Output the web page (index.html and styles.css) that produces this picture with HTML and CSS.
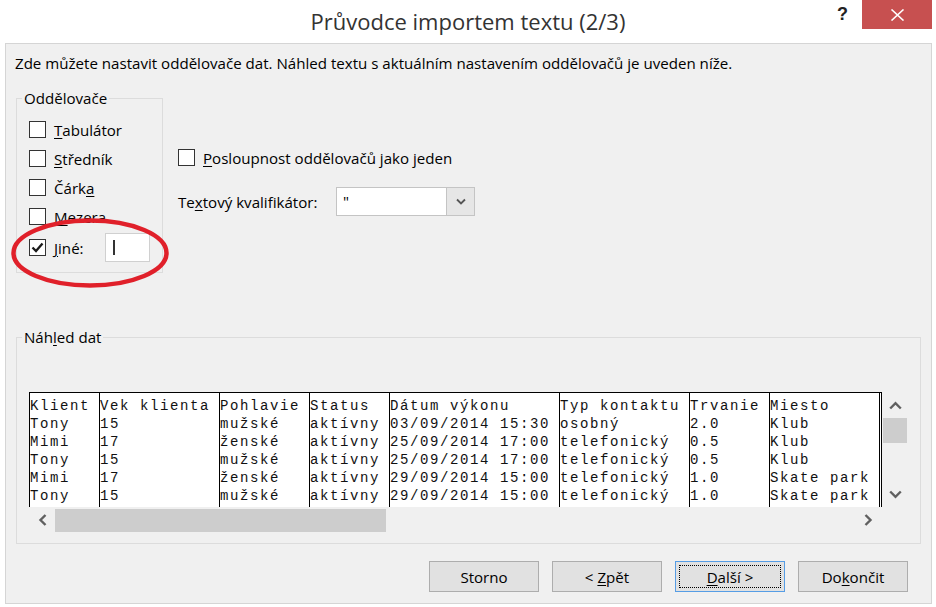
FILE: index.html
```html
<!DOCTYPE html>
<html lang="cs">
<head>
<meta charset="utf-8">
<title>Průvodce importem textu (2/3)</title>
<link rel="stylesheet" href="styles.css">
</head>
<body>
<div class="window">
  <header class="titlebar">
    <h1 class="title">Průvodce importem textu (2/3)</h1>
    <div class="tb-controls">
      <span class="help">?</span>
      <span class="close"><svg width="15" height="12" viewBox="0 0 15 12"><path d="M1.5 0.5 L13.5 11.5 M13.5 0.5 L1.5 11.5" stroke="#fff" stroke-width="1.6" fill="none"/></svg></span>
    </div>
  </header>
  <main class="panel">
    <p class="intro">Zde můžete nastavit oddělovače dat. Náhled textu s aktuálním nastavením oddělovačů je uveden níže.</p>
    <div class="options">
      <fieldset class="group delims">
        <legend>Oddělovače</legend>
        <div class="check"><span class="box"></span><span><u>T</u>abulátor</span></div>
        <div class="check"><span class="box"></span><span><u>S</u>tředník</span></div>
        <div class="check"><span class="box"></span><span>Čárk<u>a</u></span></div>
        <div class="check"><span class="box"></span><span><u>M</u>ezera</span></div>
        <div class="check other"><span class="box"><svg width="15" height="15" viewBox="0 0 15 15"><path d="M2.5 7.5 L6 11 L12.5 3.5" stroke="#1a1a1a" stroke-width="2.3" fill="none"/></svg></span><span class="other-label"><u>J</u>iné:</span><span class="textbox"><span class="caret"></span></span></div>
      </fieldset>
      <div class="right-opts">
        <div class="check"><span class="box"></span><span><u>P</u>osloupnost oddělovačů jako jeden</span></div>
        <div class="qualifier">
          <span class="q-label">Te<u>x</u>tový kvalifikátor:</span>
          <div class="select"><span class="value">"</span><span class="drop"><svg width="10" height="7" viewBox="0 0 10 7"><path d="M1 1.5 L5 5.5 L9 1.5" stroke="#555" stroke-width="1.8" fill="none"/></svg></span></div>
        </div>
      </div>
      <svg class="annotation" width="166" height="80" viewBox="0 0 166 80"><ellipse cx="82" cy="38" rx="76.5" ry="32.5" fill="none" stroke="#e0202a" stroke-width="4.5"/></svg>
    </div>
    <fieldset class="group preview">
      <legend>Náh<u>l</u>ed dat</legend>
      <div class="viewer">
        <div class="sheet">
          <div class="col c1">Klient
Tony
Mimi
Tony
Mimi
Tony</div>
          <div class="col c2">Vek klienta
15
17
15
17
15</div>
          <div class="col c3">Pohlavie
mužské
ženské
mužské
ženské
mužské</div>
          <div class="col c4">Status
aktívny
aktívny
aktívny
aktívny
aktívny</div>
          <div class="col c5">Dátum výkonu
03/09/2014 15:30
25/09/2014 17:00
25/09/2014 17:00
29/09/2014 15:00
29/09/2014 15:00</div>
          <div class="col c6">Typ kontaktu
osobný
telefonický
telefonický
telefonický
telefonický</div>
          <div class="col c7">Trvanie
2.0
0.5
0.5
1.0
1.0</div>
          <div class="col c8">Miesto
Klub
Klub
Klub
Skate park
Skate park</div>
          <div class="col c9"></div>
        </div>
        <div class="vscroll">
          <span class="sb-btn up"><svg width="13" height="9" viewBox="0 0 13 9"><path d="M1.2 7.5 L6.5 2.2 L11.8 7.5" stroke="#606060" stroke-width="2.4" fill="none"/></svg></span>
          <span class="vthumb"></span>
          <span class="sb-fill"></span>
          <span class="sb-btn down"><svg width="13" height="9" viewBox="0 0 13 9"><path d="M1.2 1.5 L6.5 6.8 L11.8 1.5" stroke="#606060" stroke-width="2.4" fill="none"/></svg></span>
        </div>
        <div class="hscroll">
          <span class="sb-btn left"><svg width="9" height="12" viewBox="0 0 9 12"><path d="M7.5 1 L2.5 6 L7.5 11" stroke="#606060" stroke-width="2.4" fill="none"/></svg></span>
          <span class="hthumb"></span>
          <span class="sb-fill"></span>
          <span class="sb-btn right"><svg width="9" height="12" viewBox="0 0 9 12"><path d="M1.5 1 L6.5 6 L1.5 11" stroke="#606060" stroke-width="2.4" fill="none"/></svg></span>
        </div>
        <div class="corner"></div>
      </div>
    </fieldset>
    <div class="buttons">
      <span class="btn"><span>Storno</span></span>
      <span class="btn"><span>&lt; <u>Z</u>pět</span></span>
      <span class="btn default"><span class="focus"><span><u>D</u>alší &gt;</span></span></span>
      <span class="btn"><span>Do<u>k</u>ončit</span></span>
    </div>
  </main>
</div>
</body>
</html>
```

FILE: styles.css
```css
* { box-sizing: border-box; }
html, body { margin: 0; padding: 0; }
body {
  width: 936px;
  height: 607px;
  overflow: hidden;
  background: #fff;
  font-family: "Open Sans", "Noto Sans", sans-serif;
  font-size: 15.1px;
  color: #000;
}
u { text-decoration-thickness: 1px; text-underline-offset: 2px; }

.window { display: flex; flex-direction: column; height: 607px; }

.titlebar {
  height: 43px;
  flex: none;
  display: grid;
  grid-template-columns: 1fr auto 1fr;
  align-items: start;
}
.title {
  grid-column: 2;
  margin: 0;
  font-weight: 400;
  font-size: 22px;
  line-height: 43px;
  color: #333;
}
.tb-controls {
  grid-column: 3;
  display: flex;
  justify-content: flex-end;
  align-items: flex-start;
  padding-right: 4px;
}
.help {
  font-family: "Liberation Sans", sans-serif;
  font-weight: 700;
  font-size: 18px;
  line-height: 29px;
  color: #222;
  margin-right: 14px;
}
.close {
  width: 70px;
  height: 29px;
  background: #c75050;
  display: flex;
  align-items: center;
  justify-content: center;
}

.panel {
  margin-left: 5px;
  width: 927px;
  height: 561px;
  flex: none;
  background: #f0f0f0;
  border: 1px solid #d5d5d5;
  padding: 0 10px 10px;
}
.intro {
  margin: 9px 0 0 -1px;
  line-height: 20px;
}

.options {
  position: relative;
  display: flex;
  margin-top: 15px;
}
.group {
  margin: 0;
  border: 1px solid #dcdcdc;
  min-width: 0;
}
.group legend {
  padding: 0 2px;
  margin-left: -7px;
  line-height: 20px;
}
.delims {
  width: 147px;
  height: 185px;
  padding: 7px 10px 8px 12px;
}
.check {
  display: flex;
  align-items: center;
  gap: 8px;
  height: 29px;
  white-space: nowrap;
}
.box {
  width: 17px;
  height: 17px;
  flex: none;
  background: #fff;
  border: 1px solid #333;
  display: flex;
  align-items: center;
  justify-content: center;
}
.check.other { height: 33px; }
.other-label { width: 43px; }
.textbox {
  width: 45px;
  height: 29px;
  background: #fff;
  border: 1px solid #d0d0d0;
  display: flex;
  align-items: center;
  padding-left: 7px;
}
.caret {
  width: 1.5px;
  height: 15px;
  background: #333;
}

.right-opts {
  margin-left: 15px;
  padding-top: 55px;
}
.qualifier {
  display: flex;
  align-items: center;
  margin-top: 15px;
  height: 29px;
}
.q-label { width: 158px; flex: none; }
.select {
  width: 139px;
  height: 29px;
  background: #fff;
  border: 1px solid #c4c4c4;
  display: flex;
  align-items: stretch;
}
.select .value { flex: 1; padding-left: 6px; line-height: 27px; }
.drop {
  width: 28px;
  background: #e6e6e6;
  border-left: 1px solid #c4c4c4;
  display: flex;
  align-items: center;
  justify-content: center;
}

.annotation {
  position: absolute;
  left: -8px;
  top: 127px;
  pointer-events: none;
}

.preview {
  width: 905px;
  margin-top: 54px;
  padding: 45px 12px 11px 12px;
}
.viewer {
  display: grid;
  grid-template-columns: 853px 26px;
  grid-template-rows: 115px 25px;
}
.sheet {
  display: flex;
  background: #fff;
  border-top: 1px solid #000;
  border-right: 1px solid #000;
  overflow: hidden;
  font-family: "Liberation Mono", "Courier New", monospace;
  font-size: 14px;
  letter-spacing: 1.6px;
  line-height: 18px;
  color: #111;
}
.col {
  flex: none;
  border-left: 1px solid #000;
  padding-top: 4px;
  white-space: pre;
  overflow: hidden;
}
.c1 { width: 70px; }
.c2 { width: 120px; }
.c3 { width: 90px; }
.c4 { width: 80px; }
.c5 { width: 170px; }
.c6 { width: 130px; }
.c7 { width: 80px; }
.c8 { width: 110px; }
.c9 { width: 2px; }

.vscroll {
  display: flex;
  flex-direction: column;
  background: #f0f0f0;
}
.sb-btn {
  display: flex;
  align-items: center;
  justify-content: center;
  flex: none;
}
.vscroll .up { height: 26px; }
.vscroll .down { height: 25px; }
.vthumb {
  height: 25px;
  margin: 0 1px;
  background: #cdcdcd;
  flex: none;
}
.sb-fill { flex: 1; }
.hscroll {
  display: flex;
  background: #f0f0f0;
}
.hscroll .left { width: 26px; }
.hscroll .right { width: 27px; }
.hthumb {
  width: 331px;
  height: 23px;
  margin-top: 2px;
  background: #cdcdcd;
  flex: none;
}
.corner { background: #f0f0f0; }

.buttons {
  display: flex;
  justify-content: flex-end;
  gap: 13px;
  margin-top: 17px;
  padding-right: 13px;
}
.btn {
  width: 110px;
  height: 31px;
  background: #e1e1e1;
  border: 1px solid #adadad;
  display: flex;
  align-items: center;
  justify-content: center;
  white-space: pre;
}
.btn.default {
  border-color: #569de5;
  padding: 3px;
  align-items: stretch;
  justify-content: stretch;
}
.btn .focus {
  flex: 1;
  border: 1px dotted #000;
  display: flex;
  align-items: center;
  justify-content: center;
}
```
